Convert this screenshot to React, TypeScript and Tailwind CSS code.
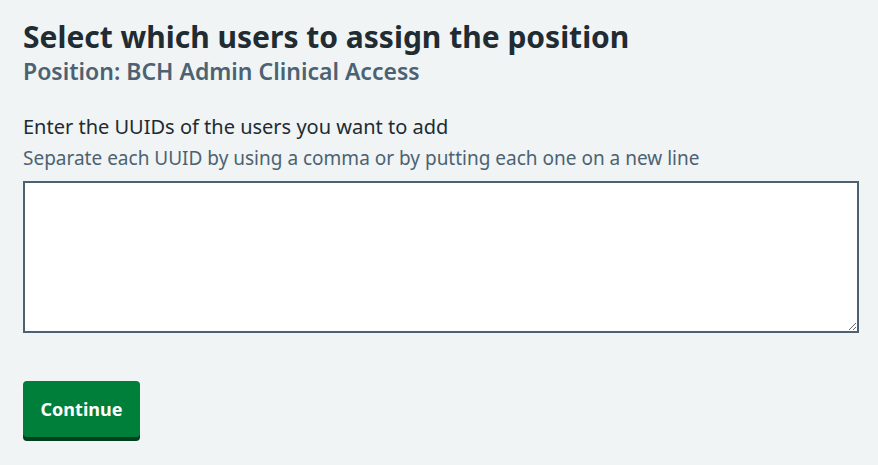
export default function App() {
  return (
    <div className="bg-[#f0f4f5] min-h-screen font-['Noto_Sans',sans-serif] text-[#212b32] px-[23px] pt-[19px]">
      <h1 className="text-[30px] font-bold leading-[36px]">Select which users to assign the position</h1>
      <p className="mt-[1px] text-[23px] font-semibold leading-[30px] text-[#4c6272]">
        Position: BCH Admin Clinical Access
      </p>
      <label htmlFor="uuids" className="block mt-[27px] text-[20px] leading-[28px]">
        Enter the UUIDs of the users you want to add
      </label>
      <div className="mt-[3px] text-[19px] leading-[28px] text-[#4c6272]">
        Separate each UUID by using a comma or by putting each one on a new line
      </div>
      <textarea
        id="uuids"
        className="block mt-[9px] w-[836px] h-[152px] border-2 border-[#4c6272] bg-white resize-y outline-none p-1"
      />
      <button className="mt-[48px] w-[117px] h-[56px] rounded-[4px] bg-[#007f3b] text-white text-[18px] font-bold shadow-[0_4px_0_#00401e]">
        Continue
      </button>
    </div>
  );
}
